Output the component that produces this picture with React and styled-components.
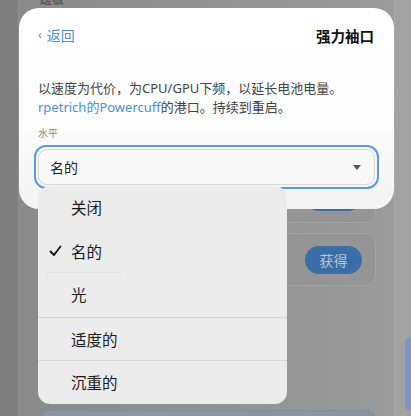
import React from "react";
import styled, { createGlobalStyle } from "styled-components";

const Global = createGlobalStyle`
  html, body { margin: 0; padding: 0; background: #8c8c8c; }
  body { font-family: "Noto Sans", "Noto Sans CJK SC", sans-serif; overflow: hidden; }
`;

const FONT = `"Noto Sans", "Noto Sans CJK SC", sans-serif`;

const Screen = styled.div`
  position: relative;
  width: 411px;
  height: 416px;
  overflow: hidden;
  display: flex;
  font-family: ${FONT};
`;

const Gutter = styled.div`
  width: ${(p) => p.$w}px;
  flex: none;
  background: ${(p) => p.$bg};
  display: flex;
  flex-direction: column;
  align-items: flex-end;
`;

const Column = styled.div`
  flex: 1;
  background: linear-gradient(90deg, #8a8a8a 0%, #939393 60%, #9b9b9b 100%);
  border-left: 1px solid #8d8d8d;
  border-right: 1px solid #aaaaaa;
  display: flex;
  flex-direction: column;
  padding: 0 18px 0 19px;
`;

const PageTitle = styled.div`
  flex: none;
  font-size: 12px;
  font-weight: 700;
  color: #5a5a5a;
  margin: -6px 0 0 2px;
  height: 12px;
  line-height: 12px;
`;

const BgCard = styled.div`
  flex: none;
  height: 53px;
  margin-top: ${(p) => p.$mt}px;
  border-radius: 10px;
  background: #959595;
  border: 1px solid #a3a3a3;
  box-sizing: border-box;
  display: flex;
  align-items: center;
  justify-content: flex-end;
  padding-right: 13px;
`;

const BgButton = styled.div`
  width: 57px;
  height: 28px;
  border-radius: 14px;
  background: #3a6ea6;
  color: #b9c4d2;
  font-size: 14px;
  display: flex;
  align-items: center;
  justify-content: center;
`;

const BgBottomCard = styled.div`
  flex: none;
  height: 40px;
  margin-top: 124px;
  margin-left: 2px;
  border-radius: 10px;
  border: 1px solid #7c8ea6;
  background: #8e949c;
`;

const BlueTab = styled.div`
  flex: none;
  width: 6px;
  height: 72px;
  margin-top: 338px;
  border-radius: 4px 0 0 4px;
  background: #7f95c8;
`;

const Sheet = styled.div`
  position: absolute;
  left: 19px;
  top: 8px;
  width: 375px;
  height: 201px;
  border-radius: 20px;
  background: linear-gradient(180deg, #ffffff 0%, #fbfbfb 60%, #f3f3f3 100%);
  box-sizing: border-box;
  padding: 19px 19px 0 19px;
  display: flex;
  flex-direction: column;
`;

const Header = styled.div`
  display: flex;
  justify-content: space-between;
  align-items: center;
  height: 16px;
`;

const Back = styled.div`
  color: #4a90d9;
  font-size: 14px;
  display: flex;
  align-items: center;
  gap: 5px;
`;

const Chevron = styled.span`
  font-size: 12px;
  transform: translateY(-1px);
`;

const Title = styled.div`
  font-size: 14.5px;
  font-weight: 700;
  color: #111;
  margin-right: 1px;
`;

const Desc = styled.p`
  margin: 36px 0 0 0;
  font-size: 13px;
  line-height: 19px;
  color: #444;
`;

const Link = styled.span`
  color: #4a90d9;
`;

const FieldLabel = styled.div`
  margin-top: 10px;
  font-size: 10px;
  color: #8a8a8a;
  height: 12px;
  line-height: 12px;
`;

const SelectRing = styled.div`
  margin: 6px 0 0 -4px;
  width: 345px;
  height: 44px;
  box-sizing: border-box;
  border: 2px solid #5a9be0;
  border-radius: 12px;
  padding: 2px;
`;

const SelectBox = styled.div`
  height: 100%;
  box-sizing: border-box;
  border: 1px solid #d7d7d7;
  border-radius: 9px;
  background: #f9f9f9;
  display: flex;
  align-items: center;
  justify-content: space-between;
  padding: 0 13px 0 11px;
  font-size: 14px;
  color: #222;
`;

const Caret = styled.svg`
  width: 8px;
  height: 5px;
`;

const Menu = styled.div`
  position: absolute;
  left: 38px;
  top: 186px;
  width: 249px;
  border-radius: 12px;
  background: #ececec;
  overflow: hidden;
  display: flex;
  flex-direction: column;
`;

const Item = styled.div`
  height: 43.6px;
  box-sizing: border-box;
  display: flex;
  align-items: center;
  font-size: 15.5px;
  color: #1a1a1a;
  position: relative;
  border-top: ${(p) => (p.$line ? "1px solid #d6d6d6" : "none")};
`;

const CheckSlot = styled.div`
  width: 33px;
  flex: none;
  display: flex;
  justify-content: flex-end;
  padding-right: 9px;
  box-sizing: border-box;
`;

const ShortRule = styled.div`
  position: absolute;
  left: 8px;
  width: 76px;
  bottom: 0;
  height: 1px;
  background: #e0e0e0;
`;

const Check = () => (
  <svg width="13" height="12" viewBox="0 0 13 12">
    <path d="M1.5 6.5 L5 10 L11.5 1.5" fill="none" stroke="#111" strokeWidth="1.8" strokeLinecap="round" strokeLinejoin="round" />
  </svg>
);

const items = [
  { label: "关闭" },
  { label: "名的", checked: true, short: true },
  { label: "光" },
  { label: "适度的", line: true },
  { label: "沉重的", line: true },
];

export default function App() {
  return (
    <>
      <Global />
      <Screen>
        <Gutter $w={18} $bg="#7f7f7f" />
        <Column>
          <PageTitle>蹉板</PageTitle>
          <BgCard $mt={164}>
            <BgButton>获得</BgButton>
          </BgCard>
          <BgCard $mt={10}>
            <BgButton>获得</BgButton>
          </BgCard>
          <BgBottomCard />
        </Column>
        <Gutter $w={16} $bg="#a2a2a2">
          <BlueTab />
        </Gutter>

        <Sheet>
          <Header>
            <Back>
              <Chevron>‹</Chevron>返回
            </Back>
            <Title>强力袖口</Title>
          </Header>
          <Desc>
            以速度为代价，为CPU/GPU下频，以延长电池电量。
            <br />
            <Link>rpetrich的Powercuff</Link>的港口。持续到重启。
          </Desc>
          <FieldLabel>水平</FieldLabel>
          <SelectRing>
            <SelectBox>
              名的
              <Caret viewBox="0 0 8 5">
                <path d="M0 0 L8 0 L4 5 Z" fill="#555" />
              </Caret>
            </SelectBox>
          </SelectRing>
        </Sheet>

        <Menu>
          {items.map((it) => (
            <Item key={it.label} $line={it.line}>
              <CheckSlot>{it.checked ? <Check /> : null}</CheckSlot>
              {it.label}
              {it.short ? <ShortRule /> : null}
            </Item>
          ))}
        </Menu>
      </Screen>
    </>
  );
}
